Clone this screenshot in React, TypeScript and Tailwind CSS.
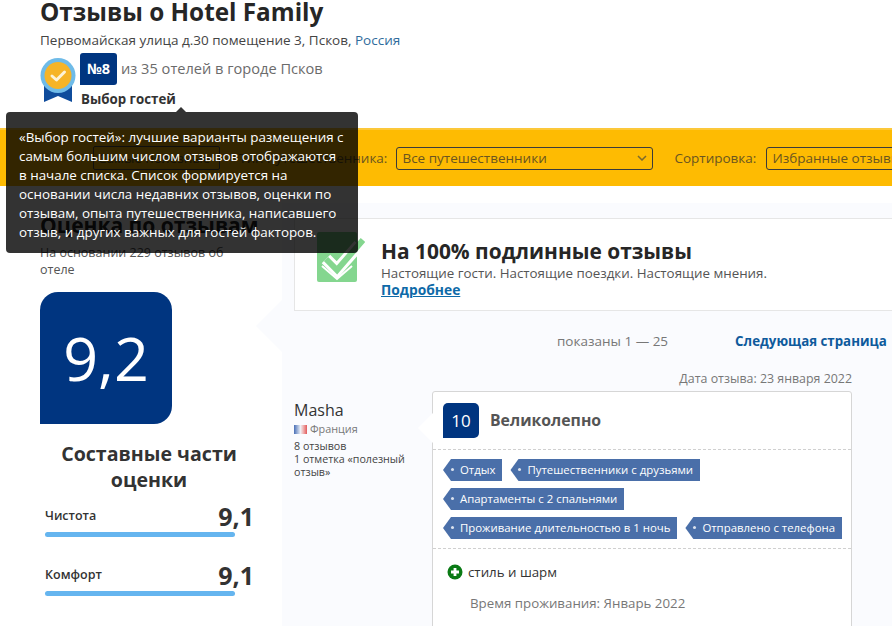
const font = "font-['Open_Sans','Noto_Sans',sans-serif]";

const Tag = ({ label }: { label: string }) => (
  <span className="relative flex h-[22px] items-center whitespace-nowrap bg-[#4a6fa9] pl-[17px] pr-[7px] text-[11.4px] text-white [clip-path:polygon(8px_0,100%_0,100%_100%,8px_100%,0_50%)]">
    <span className="absolute left-[8px] top-[9px] h-[3px] w-[3px] rounded-full bg-white/80" />
    {label}
  </span>
);

const Bar = ({ label, value }: { label: string; value: string }) => (
  <div className="ml-[5px] w-[209px]">
    <div className="flex items-end justify-between">
      <span className="mb-[5px] text-[12.5px] font-semibold text-[#333]">{label}</span>
      <span className="text-[25px] leading-[30px] font-bold text-[#333]">{value}</span>
    </div>
    <div className="mt-[1px] h-[5px] w-[190px] rounded-full bg-[#65b5ef]" />
  </div>
);

const Medal = () => (
  <svg width="36" height="44" viewBox="0 0 36 44" className="shrink-0">
    <path d="M4 26 V44 L18 38 L32 44 V26 Z" fill="#0f4c9c" />
    <circle cx="18" cy="17.5" r="17.5" fill="#6fbbe8" />
    <circle cx="18" cy="17.5" r="13.5" fill="#f6b427" />
    <path d="M12 18 L16.5 22 L24.5 14" fill="none" stroke="#fdf3d8" strokeWidth="3" strokeLinecap="round" strokeLinejoin="round" />
  </svg>
);

const ShieldCheck = () => (
  <svg width="48" height="51" viewBox="0 0 48 51" className="mt-[13px] shrink-0 self-start">
    <rect x="0" y="0" width="40" height="50" rx="2" fill="#84d68f" />
    <path d="M9 27 L20 38 L42 13" fill="none" stroke="#fff" strokeWidth="12" />
    <path d="M9 27 L20 38 L46 8" fill="none" stroke="#84d68f" strokeWidth="6" />
    <path d="M5 34 L20 47 L35 34" fill="none" stroke="#fff" strokeWidth="2" />
  </svg>
);

const PlusIcon = () => (
  <svg width="16" height="16" viewBox="0 0 16 16" className="shrink-0">
    <circle cx="8" cy="8" r="7.5" fill="#0a7a15" />
    <path d="M8 4 V12 M4 8 H12" stroke="#fff" strokeWidth="2.8" />
  </svg>
);

const Chevron = () => (
  <svg width="10" height="6" viewBox="0 0 10 6" className="shrink-0">
    <path d="M1 1 L5 5 L9 1" fill="none" stroke="#7a6a30" strokeWidth="1.5" />
  </svg>
);

export default function App() {
  return (
    <div className={`${font} relative h-[626px] w-[892px] overflow-hidden bg-white text-[#333]`}>
      {/* Header */}
      <header className="flow-root h-[128px] pl-10">
        <h1 className="-mt-[4px] text-[24.3px] leading-[32px] font-bold text-[#262626]">Отзывы о Hotel Family</h1>
        <p className="mt-[3px] text-[13.5px] leading-[18px] text-[#444]">
          Первомайская улица д.30 помещение 3, Псков, <span className="text-[#2f6c9c]">Россия</span>
        </p>
        <div className="mt-[4px] flex">
          <div className="mt-[5px]">
            <Medal />
          </div>
          <div className="ml-[4px]">
            <div className="flex items-center">
              <span className="flex h-[32px] w-[37px] items-center justify-center rounded-[3px] rounded-bl-none bg-[#003580] text-[14.5px] font-bold text-white">№8</span>
              <span className="ml-[4px] text-[14.6px] text-[#6b6b6b]">из 35 отелей в городе Псков</span>
            </div>
            <div className="mt-[6px] ml-[1px] text-[13.3px] leading-[17px] font-bold text-[#333]">Выбор гостей</div>
          </div>
        </div>
      </header>

      {/* Filters */}
      <div className="flex h-[58px] items-center border-t-2 border-[#fcc83a] bg-[#febb02] pl-[93px] text-[13.5px] text-[#6a5520]">
        <div className="flex h-[24px] w-[127px] shrink-0 items-center rounded-[2px] border border-[#4b4b4b] px-[4px]">Самые полезные</div>
        <span className="ml-[19px] shrink-0 whitespace-nowrap">Тип путешественника:</span>
        <div className="ml-[9px] flex h-[23px] w-[257px] shrink-0 items-center justify-between rounded-[3px] border border-[#3b3b3b] pl-[5px] pr-[5px]">
          <span>Все путешественники</span>
          <Chevron />
        </div>
        <span className="ml-[21px] shrink-0">Сортировка:</span>
        <div className="ml-[10px] flex h-[23px] w-[200px] shrink-0 items-center rounded-[3px] border border-[#3b3b3b] pl-[5px] whitespace-nowrap">Избранные отзывы</div>
      </div>

      <div className="flex h-[440px]">
        {/* Score column */}
        <aside className="relative w-[282px] shrink-0 pl-10">
          <h2 className="mt-[26px] text-[21px] leading-[26px] font-bold text-[#262626]">Оценка по отзывам</h2>
          <p className="mt-[6px] w-[220px] text-[12.5px] leading-[17px] text-[#555]">На основании 229 отзывов об отеле</p>
          <div className="mt-[14px] flex h-[132px] w-[132px] items-center justify-center rounded-[18px] rounded-bl-none bg-[#003580] text-[61px] font-normal text-white">9,2</div>
          <h3 className="mt-[17px] w-[218px] text-center text-[19.6px] leading-[26px] font-bold text-[#333]">Составные части оценки</h3>
          <div className="mt-[8px] flex flex-col gap-[23px]">
            <Bar label="Чистота" value="9,1" />
            <Bar label="Комфорт" value="9,1" />
          </div>
          <div className="absolute right-0 top-[114px] h-[52px] w-[26px] bg-[#fafbfe] [clip-path:polygon(100%_0,100%_100%,0_50%)]" />
        </aside>

        {/* Reviews */}
        <main className="min-w-0 flex-1 bg-[linear-gradient(#fff_17px,#fafbfe_17px)] pl-3 pt-8">
          <section className="-mr-[2px] flex h-[93px] border border-[#e6e6e6] bg-white pl-[22px]">
            <ShieldCheck />
            <div className="ml-[16px] pt-[19px]">
              <div className="text-[20.9px] leading-[26px] font-bold text-[#262626]">На 100% подлинные отзывы</div>
              <div className="text-[13.35px] leading-[18px] text-[#555]">Настоящие гости. Настоящие поездки. Настоящие мнения.</div>
              <div className="-mt-[1px] text-[13.8px] leading-[18px] font-bold text-[#0e6aa8] underline">Подробнее</div>
            </div>
          </section>

          <div className="mt-[20px] flex items-center text-[13.5px] leading-[20px]">
            <span className="ml-[263px] text-[#777]">показаны 1 — 25</span>
            <span className="ml-[67px] text-[13.3px] font-bold whitespace-nowrap text-[#0e5a9c]">Следующая страница</span>
          </div>

          <div className="mt-[19px] mr-[40px] text-right text-[12.4px] leading-[18px] text-[#777]">Дата отзыва: 23 января 2022</div>

          <div className="mt-[3px] flex">
            <div className="w-[138px] shrink-0 pt-[8px]">
              <div className="text-[16px] leading-[22px] text-[#333]">Masha</div>
              <div className="flex items-center text-[10.8px] leading-[16px] text-[#777]">
                <span className="mr-[3px] h-[9px] w-[13px] bg-gradient-to-r from-[#4a6fb5] via-[#eef0f5] to-[#e0585c]" />
                Франция
              </div>
              <div className="mt-[3px] w-[120px] text-[10.7px] leading-[13px] text-[#444]">
                8 отзывов
                <br />1 отметка «полезный отзыв»
              </div>
            </div>

            <article className="relative h-[240px] w-[420px] shrink-0 rounded-[3px] border border-[#d6d6d6] bg-white">
              <span className="absolute -left-[15px] top-[21px] h-[30px] w-[15px] bg-white [clip-path:polygon(100%_0,100%_100%,0_50%)]" />
              <div className="flex items-center border-b border-dashed border-[#d0d0d0] pl-[10px] pt-[11px] pb-[11px]">
                <span className="flex h-[35px] w-[36px] items-center justify-center rounded-[5px] rounded-bl-none bg-[#003580] text-[17px] text-white">10</span>
                <span className="ml-[11px] mt-[1px] text-[15.8px] font-bold text-[#555]">Великолепно</span>
              </div>
              <div className="flex flex-col gap-[7px] border-b border-dashed border-[#d0d0d0] pl-[10px] pt-[9px] pb-[9px]">
                <div className="flex gap-[8px]">
                  <Tag label="Отдых" />
                  <Tag label="Путешественники с друзьями" />
                </div>
                <div className="flex gap-[8px]">
                  <Tag label="Апартаменты с 2 спальнями" />
                </div>
                <div className="flex gap-[8px]">
                  <Tag label="Проживание длительностью в 1 ночь" />
                  <Tag label="Отправлено с телефона" />
                </div>
              </div>
              <div className="mt-[13px] flex items-center pl-[14px] text-[13.3px] leading-[20px] text-[#333]">
                <PlusIcon />
                <span className="ml-[5px]">стиль и шарм</span>
              </div>
              <div className="mt-[12px] pl-[37px] text-[13.3px] leading-[18px] text-[#777]">Время проживания: Январь 2022</div>
            </article>
          </div>
        </main>
      </div>

      {/* Tooltip */}
      <div className="absolute left-[6px] top-[112px] h-[141px] w-[352px] rounded-[4px] bg-black/80 pl-[13px] pr-[12px] pt-[16px] text-[13.4px] leading-[19px] text-white">
        <span className="absolute left-[170px] -top-[5px] h-0 w-0 border-x-[5px] border-b-[5px] border-x-transparent border-b-[#333]" />
        «Выбор гостей»: лучшие варианты размещения с самым большим числом отзывов отображаются в начале списка. Список формируется на основании числа недавних отзывов, оценки по отзывам, опыта путешественника, написавшего отзыв, и других важных для гостей факторов.
      </div>
    </div>
  );
}
